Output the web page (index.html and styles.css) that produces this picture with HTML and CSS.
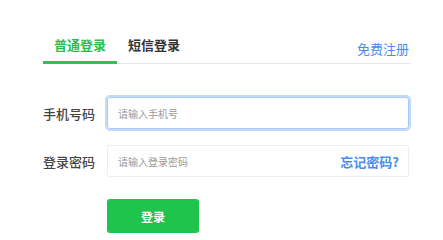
FILE: index.html
```html
<!DOCTYPE html>
<html lang="zh-CN">
<head>
<meta charset="utf-8">
<title>登录</title>
<link rel="stylesheet" href="styles.css">
</head>
<body>
<div class="page">
  <div class="nav">
    <div class="tabs">
      <a class="tab active">普通登录</a>
      <a class="tab">短信登录</a>
    </div>
    <a class="register">免费注册</a>
  </div>
  <form class="form">
    <div class="row">
      <label class="label">手机号码</label>
      <div class="field focus">
        <input class="input" type="text" placeholder="请输入手机号">
      </div>
    </div>
    <div class="row">
      <label class="label">登录密码</label>
      <div class="field">
        <input class="input" type="password" placeholder="请输入登录密码">
        <a class="forgot">忘记密码?</a>
      </div>
    </div>
    <div class="row">
      <span class="label"></span>
      <button class="btn" type="button">登录</button>
    </div>
  </form>
</div>
</body>
</html>
```
FILE: styles.css
```css
* { box-sizing: border-box; }
html, body { margin: 0; padding: 0; background: #fff; }
body {
  font-family: "Noto Sans CJK SC", "Noto Sans", sans-serif;
  color: #333;
}
.page {
  width: 368px;
  margin-left: 43px;
  padding-top: 36px;
}
.nav {
  display: flex;
  justify-content: space-between;
  align-items: flex-end;
  border-bottom: 1px solid #e8e8e8;
}
.tabs { display: flex; }
.tab {
  display: block;
  padding: 0 11px 7px;
  font-size: 13px;
  line-height: 18px;
  font-weight: 700;
  color: #333;
  border-bottom: 3px solid transparent;
  margin-bottom: -1px;
}
.tab.active {
  color: #2fbb4f;
  border-bottom-color: #33c152;
}
.register {
  font-size: 13px;
  line-height: 18px;
  color: #4a8cf2;
  padding-bottom: 5px;
  margin-right: 2px;
}
.form {
  margin: 33px 0 0;
  display: flex;
  flex-direction: column;
  gap: 16px;
}
.row {
  display: flex;
  align-items: center;
}
.row:last-child { margin-top: 6px; }
.label {
  width: 64px;
  flex: none;
  font-size: 13px;
  font-weight: 500;
  color: #444;
}
.field {
  position: relative;
  width: 302px;
  height: 32px;
  border: 1px solid #eeeeee;
  border-radius: 2px;
  display: flex;
  align-items: center;
}
.field.focus {
  border-color: #a9cbf5;
  box-shadow: 0 0 0 2px #c3dbf8;
  border-radius: 3px;
}
.input {
  flex: 1;
  height: 100%;
  border: none;
  outline: none;
  background: transparent;
  padding: 0 10px;
  font-family: inherit;
  font-size: 10px;
  color: #333;
}
.input::placeholder { color: #9a9a9a; }
.forgot {
  flex: none;
  font-size: 13px;
  font-weight: 700;
  color: #4a8cf2;
  padding-right: 9px;
}
.btn {
  width: 92px;
  height: 34px;
  border: none;
  border-radius: 3px;
  background: #1ec44b;
  color: #fff;
  font-family: inherit;
  font-size: 12px;
  font-weight: 700;
  padding: 0;
}
```
